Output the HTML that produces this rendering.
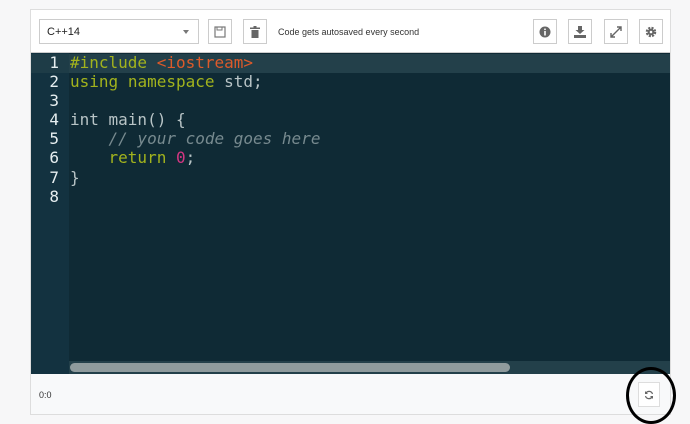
<!DOCTYPE html>
<html><head><style>
*{margin:0;padding:0;box-sizing:border-box}
body{width:690px;height:420px;background:#f7f7f8;position:relative;overflow:hidden;font-family:"Liberation Sans",sans-serif}
.panel{position:absolute;left:30px;top:9px;width:641px;height:406px;border:1px solid #ddd;background:#f8f9fa}
.tb{position:absolute;left:0;top:0;width:100%;height:43px;background:#fff;border-bottom:1px solid #ccc}
.sel{position:absolute;left:8px;top:9px;width:160px;height:25px;border:1px solid #ccc;background:#fff;font-size:11px;padding:6px 7px;color:#222}
.sel:after{content:"";position:absolute;right:9px;top:10px;border:3px solid transparent;border-top:4px solid #777}
.btn{position:absolute;top:9px;width:24px;height:25px;border:1px solid #ccc;background:#fff;display:flex;align-items:center;justify-content:center}
.note{position:absolute;left:247px;top:17px;font-size:9px;color:#333}
.ed{position:absolute;left:0;top:43px;width:639px;height:321px;background:#0f2a35}
.gut{position:absolute;left:0;top:0;width:38px;height:100%;background:#133240}
.hl{position:absolute;left:0;top:1px;width:100%;height:19px;background:#23404a}
.hlg{position:absolute;left:0;top:1px;width:38px;height:19px;background:#1e3c47}
pre{position:absolute;top:0px;font-family:"DejaVu Sans Mono",monospace;font-size:16px;line-height:19.1px;color:#b8c4c6}
.ln{left:0;width:28px;text-align:right;color:#e6eef0}
.code{left:39px}
.k{color:#a2b31d}.s{color:#dd5a2a}.c{color:#778a8f;font-style:italic}.n{color:#d33682}
.sb{position:absolute;left:38px;top:308px;width:601px;height:13px;background:#23404a}
.th{position:absolute;left:1px;top:2px;width:440px;height:9px;border-radius:5px;background:#8f9b9d}
.st{position:absolute;left:8px;top:380px;font-size:9px;color:#333}
.rf{position:absolute;left:607px;top:372px;width:22px;height:25px;border:1px solid #ddd;background:#fff;display:flex;align-items:center;justify-content:center}
.circ{position:absolute;left:626px;top:367px;width:50px;height:57px;border:3px solid #000;border-radius:50%}
</style></head><body>
<div class="panel">
 <div class="tb">
  <div class="sel">C++14</div>
  <div class="btn" style="left:177px"><svg width="12" height="12" viewBox="0 0 12 12"><rect x="1" y="1" width="10" height="10" fill="none" stroke="#777" stroke-width="1.2"/><rect x="3" y="1" width="5" height="3" fill="none" stroke="#777"/></svg></div>
  <div class="btn" style="left:212px"><svg width="10" height="12" viewBox="0 0 10 12"><rect x="0" y="1.5" width="10" height="1.5" fill="#666"/><rect x="3.5" y="0" width="3" height="1.5" fill="#666"/><path d="M1.5 4h7v8h-7z" fill="#666"/></svg></div>
  <div class="note">Code gets autosaved every second</div>
  <div class="btn" style="left:502px"><svg width="12" height="12"><circle cx="6" cy="6" r="5.5" fill="#666"/><rect x="5.2" y="5" width="1.6" height="4.5" fill="#fff"/><circle cx="6" cy="3.3" r="0.9" fill="#fff"/></svg></div>
  <div class="btn" style="left:537px"><svg width="12" height="12"><path d="M4 0h4v4h2.5L6 8 1.5 4H4z" fill="#666"/><rect x="0" y="9" width="12" height="3" fill="#666"/></svg></div>
  <div class="btn" style="left:573px"><svg width="12" height="12"><path d="M1 11L11 1M7 1h4v4M1 7v4h4" stroke="#666" stroke-width="1.4" fill="none"/></svg></div>
  <div class="btn" style="left:608px"><svg width="12" height="12"><circle cx="6" cy="6" r="4" fill="none" stroke="#666" stroke-width="2.5" stroke-dasharray="2 1.2"/><circle cx="6" cy="6" r="3.3" fill="#666"/><circle cx="6" cy="6" r="1.3" fill="#fff"/></svg></div>
 </div>
 <div class="ed">
  <div class="gut"></div><div class="hl"></div><div class="hlg"></div>
<pre class="ln">1
2
3
4
5
6
7
8</pre>
<pre class="code"><span class="k">#include</span> <span class="s">&lt;iostream&gt;</span>
<span class="k">using</span> <span class="k">namespace</span> std;

int main() {
    <span class="c">// your code goes here</span>
    <span class="k">return</span> <span class="n">0</span>;
}
</pre>
  <div class="sb"><div class="th"></div></div>
 </div>
 <div class="st">0:0</div>
 <div class="rf"><svg width="10" height="10" viewBox="0 0 10 10"><path d="M8.5 4A3.6 3.6 0 0 0 2 3M1.5 6A3.6 3.6 0 0 0 8 7" stroke="#666" stroke-width="1.2" fill="none"/><path d="M1 1v3h3z" fill="#666"/><path d="M9 9V6H6z" fill="#666"/></svg></div>
</div>
<div class="circ"></div>
</body></html>
